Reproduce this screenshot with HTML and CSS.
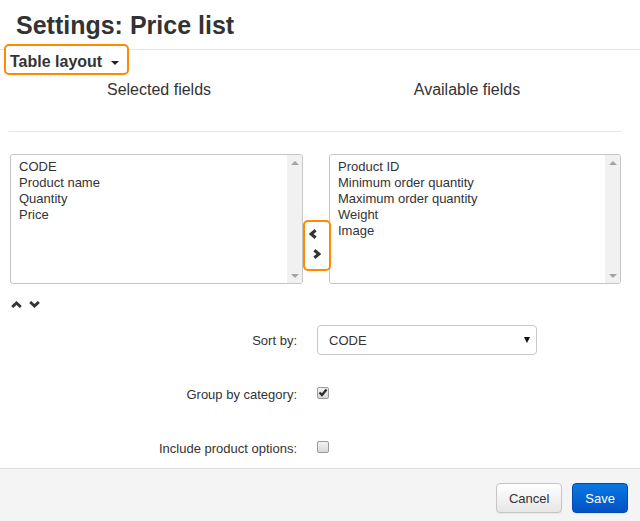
FILE: index.html
```html
<!DOCTYPE html>
<html>
<head>
<meta charset="utf-8">
<link rel="stylesheet" href="styles.css">
</head>
<body>
<h1 class="title">Settings: Price list</h1>
<div class="toggle">Table layout<span class="caret"></span></div>
<div class="headers">
  <div class="col-head">Selected fields</div>
  <div class="col-head">Available fields</div>
</div>
<div class="divider"></div>
<div class="lists">
  <div class="listbox left">
    <div class="items">
      <div>CODE</div>
      <div>Product name</div>
      <div>Quantity</div>
      <div>Price</div>
    </div>
    <div class="scrollbar"><span class="sb-up"></span><span class="sb-down"></span></div>
  </div>
  <div class="mid">
    <div class="movebox">
      <svg class="chev-l" width="8" height="10" viewBox="0 0 8 10"><polyline points="6.6,1.2 2.1,5 6.6,8.8" fill="none" stroke="#333" stroke-width="3.1"/></svg>
      <svg class="chev-r" width="8" height="10" viewBox="0 0 8 10"><polyline points="1.4,1.2 5.9,5 1.4,8.8" fill="none" stroke="#333" stroke-width="3.1"/></svg>
    </div>
  </div>
  <div class="listbox right">
    <div class="items">
      <div>Product ID</div>
      <div>Minimum order quantity</div>
      <div>Maximum order quantity</div>
      <div>Weight</div>
      <div>Image</div>
    </div>
    <div class="scrollbar"><span class="sb-up"></span><span class="sb-down"></span></div>
  </div>
</div>
<div class="order">
  <svg width="11" height="7" viewBox="0 0 11 7"><polyline points="1.2,6 5.5,2 9.8,6" fill="none" stroke="#333" stroke-width="2.9"/></svg>
  <svg width="11" height="7" viewBox="0 0 11 7"><polyline points="1.2,1 5.5,5 9.8,1" fill="none" stroke="#333" stroke-width="2.9"/></svg>
</div>
<div class="form">
  <div class="label">Sort by:</div>
  <div class="control"><div class="select">CODE<span class="sel-caret"></span></div></div>
  <div class="label">Group by category:</div>
  <div class="control"><span class="checkbox checked"><svg width="10" height="9" viewBox="0 0 10 9"><polyline points="1.5,4.5 4,7 8.5,1.5" fill="none" stroke="#2a2a2a" stroke-width="2.2"/></svg></span></div>
  <div class="label">Include product options:</div>
  <div class="control"><span class="checkbox"></span></div>
</div>
<div class="footer">
  <button class="btn">Cancel</button>
  <button class="btn primary">Save</button>
</div>
</body>
</html>
```
FILE: styles.css
```css
html, body {
  margin: 0;
  padding: 0;
  background: #fff;
  font-family: "Liberation Sans", Arial, sans-serif;
  color: #333;
  overflow: hidden;
}
.title {
  margin: 0;
  height: 50px;
  box-sizing: border-box;
  padding: 10px 0 0 16px;
  font-size: 25px;
  line-height: 30px;
  font-weight: bold;
  color: #333;
  border-bottom: 1px solid #e6e6e6;
}
.toggle {
  margin: -4px 0 0 6px;
  width: 121px;
  height: 27px;
  box-sizing: border-box;
  padding: 6px 0 0 4px;
  line-height: 20px;
  font-size: 16px;
  font-weight: bold;
  color: #333;
  outline: 2px solid #ff8a00;
  border-radius: 3px;
  display: flex;
  align-items: flex-start;
  background: #fff;
}
.caret {
  width: 0;
  height: 0;
  border-left: 4px solid transparent;
  border-right: 4px solid transparent;
  border-top: 4px solid #222;
  margin: 9px 0 0 9px;
}
.headers {
  display: grid;
  grid-template-columns: 308px 308px;
  margin: 7px 0 0 5px;
}
.col-head {
  text-align: center;
  font-size: 16px;
  line-height: 20px;
  color: #333;
}
.divider {
  margin: 31px 0 0 9px;
  width: 613px;
  height: 1px;
  background: #e6e6e6;
}
.lists {
  display: flex;
  margin: 22px 0 0 10px;
  align-items: flex-start;
}
.listbox {
  display: flex;
  height: 130px;
  box-sizing: border-box;
  border: 1px solid #c6c6c6;
  border-radius: 3px;
  overflow: hidden;
  background: #fff;
}
.listbox.left { width: 293px; }
.listbox.right { width: 292px; }
.items {
  flex: 1;
  padding: 4px 8px;
  font-size: 13px;
  line-height: 16px;
  color: #333;
}
.scrollbar {
  width: 15px;
  background: #f1f1f1;
  display: flex;
  flex-direction: column;
  justify-content: space-between;
  align-items: center;
  padding: 6px 0 5px;
}
.sb-up {
  width: 0; height: 0;
  border-left: 4px solid transparent;
  border-right: 4px solid transparent;
  border-bottom: 4px solid #a3a3a3;
}
.sb-down {
  width: 0; height: 0;
  border-left: 4px solid transparent;
  border-right: 4px solid transparent;
  border-top: 4px solid #a3a3a3;
}
.mid {
  width: 26px;
  flex: none;
}
.movebox {
  margin: 68px 0 0 2px;
  width: 24px;
  height: 47px;
  box-sizing: border-box;
  padding-top: 7px;
  outline: 2px solid #ff8a00;
  border-radius: 3px;
  position: relative;
  z-index: 1;
}
.movebox svg { display: block; }
.chev-l { margin: 0 0 0 4px; }
.chev-r { margin: 10px 0 0 8px; }
.order {
  display: flex;
  gap: 7px;
  margin: 17px 0 0 11px;
}
.order svg { display: block; }
.form {
  display: grid;
  grid-template-columns: 297px 220px;
  column-gap: 20px;
  row-gap: 24px;
  grid-auto-rows: 30px;
  margin-top: 17px;
  font-size: 13px;
}
.label {
  text-align: right;
  align-self: center;
  line-height: 16px;
  padding-top: 2px;
}
.control {
  display: flex;
  align-items: center;
}
.select {
  width: 100%;
  height: 30px;
  box-sizing: border-box;
  border: 1px solid #c8c8c8;
  border-radius: 4px;
  padding: 0 6px 0 11px;
  display: flex;
  align-items: center;
  justify-content: space-between;
  font-size: 13px;
  color: #333;
  background: #fff;
}
.sel-caret {
  width: 0; height: 0;
  border-left: 3px solid transparent;
  border-right: 3px solid transparent;
  border-top: 6px solid #111;
}
.checkbox {
  width: 12px;
  height: 12px;
  box-sizing: border-box;
  border: 1px solid #9a9a9a;
  border-radius: 2px;
  background: linear-gradient(#f2f2f2, #d8d8d8);
  margin-top: -3px;
  display: flex;
  align-items: center;
  justify-content: center;
}
.checkbox svg { display: block; }
.footer {
  margin-top: 5px;
  height: 53px;
  box-sizing: border-box;
  border-top: 1px solid #dcdcdc;
  background: #f4f4f4;
  display: flex;
  justify-content: flex-end;
  gap: 10px;
  padding: 14px 12px 0 0;
}
.btn {
  height: 30px;
  padding: 0 12px;
  font-family: "Liberation Sans", Arial, sans-serif;
  font-size: 13px;
  color: #333;
  border: 1px solid #c5c5c5;
  border-radius: 4px;
  background: linear-gradient(#ffffff, #e6e6e6);
  box-shadow: 0 1px 1px rgba(0,0,0,0.06);
}
.btn.primary {
  color: #fff;
  border-color: #0049b8;
  background: linear-gradient(#0a78e3, #0052c4);
}
```
